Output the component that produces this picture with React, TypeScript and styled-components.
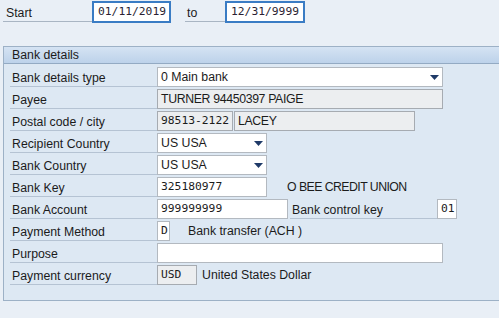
import React from 'react'
import styled, { createGlobalStyle } from 'styled-components'

const GlobalStyle = createGlobalStyle`
  html, body {
    margin: 0;
    padding: 0;
    background: #e9eff6;
    overflow: hidden;
  }
  body {
    font-family: "Liberation Sans", Arial, sans-serif;
    font-size: 12.3px;
    color: #1b1b1b;
  }
`

const Page = styled.div`
  width: 499px;
  height: 318px;
  overflow: hidden;
  padding-top: 1px;
  box-sizing: border-box;
`

const TopBar = styled.div`
  display: flex;
  align-items: flex-start;
  padding-left: 3px;
  height: 22px;
`

const TopLabel = styled.div<{ w: number, pad: number, gap?: number }>`
  width: ${p => p.w}px;
  height: 21px;
  margin-left: ${p => p.gap || 0}px;
  box-sizing: border-box;
  border-bottom: 1px solid #a9b5c3;
  padding-left: ${p => p.pad}px;
  display: flex;
  align-items: flex-end;
  padding-bottom: 2px;
  line-height: 1;
`

const DateBox = styled.div<{ w: number }>`
  width: ${p => p.w}px;
  height: 22px;
  box-sizing: border-box;
  border: 2px solid #3a7cc4;
  background: #fff;
  padding-left: 4px;
  font-family: "DejaVu Sans Mono", "Liberation Mono", monospace;
  font-size: 11.3px;
  line-height: 18px;
  color: #2b1f33;
`

const GroupBox = styled.div`
  margin-top: 23px;
  margin-left: 3px;
  width: 530px;
  border: 1px solid #9db1c6;
  background: #dde8f3;
`

const GroupHeader = styled.div`
  height: 16px;
  line-height: 16px;
  padding-left: 8px;
  border-bottom: 1px solid #93aac3;
  background: linear-gradient(#d5e3f3, #bdd2ea);
`

const Rows = styled.div`
  padding: 2px 0 14px 6px;
`

const Row = styled.div`
  display: flex;
  align-items: flex-start;
  height: 22px;
  padding-top: 1px;
  box-sizing: border-box;
`

const Label = styled.div<{ gap?: number }>`
  width: 147px;
  height: 20px;
  margin-left: ${p => p.gap || 0}px;
  box-sizing: border-box;
  border-bottom: 1px solid #b5c3d3;
  padding-left: 2px;
  padding-bottom: 2px;
  display: flex;
  align-items: flex-end;
  line-height: 1;
`

const Field = styled.div<{ w: number, readOnly?: boolean, mono?: boolean, gap?: number, caps?: boolean }>`
  position: relative;
  width: ${p => p.w}px;
  height: 20px;
  margin-left: ${p => p.gap || 0}px;
  box-sizing: border-box;
  border: 1px solid ${p => p.readOnly ? '#a6abb1' : '#b3b9c0'};
  background: ${p => p.readOnly ? '#eceef0' : '#fff'};
  padding-left: 3px;
  line-height: 18px;
  white-space: nowrap;
  overflow: hidden;
  letter-spacing: ${p => p.caps ? '-0.35px' : 'normal'};
  font-family: ${p => p.mono ? '"DejaVu Sans Mono", "Liberation Mono", monospace' : 'inherit'};
  font-size: ${p => p.mono ? '11.3px' : 'inherit'};
`

const Arrow = styled.svg`
  position: absolute;
  right: 3px;
  top: 7px;
`

const Desc = styled.div<{ gap: number, caps?: boolean }>`
  margin-left: ${p => p.gap}px;
  line-height: 21px;
  white-space: nowrap;
  letter-spacing: ${p => p.caps ? '-0.55px' : 'normal'};
`

const DropArrow = () => (
  <Arrow width="9" height="5" viewBox="0 0 9 5">
    <polygon points="0,0 9,0 4.5,5" fill="#1f3a68" />
  </Arrow>
)

const App = () => {
  return (
    <Page>
      <GlobalStyle />
      <TopBar>
        <TopLabel w={89} pad={3}>Start</TopLabel>
        <DateBox w={79}>01/11/2019</DateBox>
        <TopLabel w={40} pad={2} gap={14}>to</TopLabel>
        <DateBox w={80}>12/31/9999</DateBox>
      </TopBar>
      <GroupBox>
        <GroupHeader>Bank details</GroupHeader>
        <Rows>
          <Row>
            <Label>Bank details type</Label>
            <Field w={286}>0 Main bank<DropArrow /></Field>
          </Row>
          <Row>
            <Label>Payee</Label>
            <Field w={286} readOnly caps>TURNER 94450397 PAIGE</Field>
          </Row>
          <Row>
            <Label>Postal code / city</Label>
            <Field w={76} readOnly mono>98513-2122</Field>
            <Field w={181} readOnly gap={1} caps>LACEY</Field>
          </Row>
          <Row>
            <Label>Recipient Country</Label>
            <Field w={110}>US USA<DropArrow /></Field>
          </Row>
          <Row>
            <Label>Bank Country</Label>
            <Field w={110}>US USA<DropArrow /></Field>
          </Row>
          <Row>
            <Label>Bank Key</Label>
            <Field w={110} mono>325180977</Field>
            <Desc gap={20} caps>O BEE CREDIT UNION</Desc>
          </Row>
          <Row>
            <Label>Bank Account</Label>
            <Field w={131} mono>999999999</Field>
            <Label gap={2}>Bank control key</Label>
            <Field w={20} mono>01</Field>
          </Row>
          <Row>
            <Label>Payment Method</Label>
            <Field w={13} mono>D</Field>
            <Desc gap={18}>Bank transfer (ACH )</Desc>
          </Row>
          <Row>
            <Label>Purpose</Label>
            <Field w={286}></Field>
          </Row>
          <Row>
            <Label>Payment currency</Label>
            <Field w={40} readOnly mono>USD</Field>
            <Desc gap={5}>United States Dollar</Desc>
          </Row>
        </Rows>
      </GroupBox>
    </Page>
  )
}

export default App
